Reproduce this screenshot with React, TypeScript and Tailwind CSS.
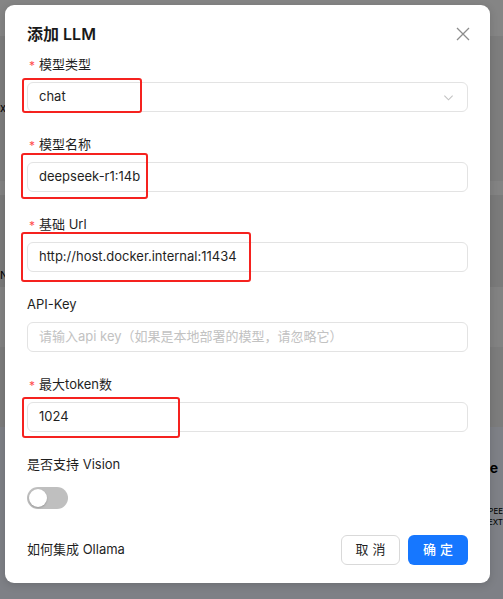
import React from "react";

type MarkProps = {
  left: number;
  top: number;
  width: number;
  height: number;
};

// red annotation rectangle drawn over a field
function Mark({ left, top, width, height }: MarkProps) {
  return (
    <div
      className="absolute border-2 border-[#f5221f] rounded-[3px] pointer-events-none"
      style={{ left, top, width, height }}
    />
  );
}

type FieldProps = {
  label: string;
  required?: boolean;
  value?: string;
  placeholder?: string;
  select?: boolean;
  mark?: MarkProps;
};

function Field(props: FieldProps) {
  const { label, required, value, placeholder, select, mark } = props;
  return (
    <div className="mb-[21px]">
      <div className="h-[22px] mb-[7px] flex items-center text-[13px] text-[#1f1f1f] pt-[1px]">
        {required && <span className="text-[#ff4d4f] mr-[4px] ml-[2px] text-[12px] mt-[2px]">*</span>}
        <span>{label}</span>
      </div>
      <div className="relative">
        <div className="h-[30px] rounded-[6px] border border-[#e3e3e3] bg-white flex items-center px-[11px] text-[13px]">
          {value ? (
            <span className="text-[#1f1f1f]">{value}</span>
          ) : (
            <span className="text-[#c2c2c2]">{placeholder}</span>
          )}
          {select && (
            <svg className="ml-auto mr-[2px]" width="11" height="11" viewBox="0 0 12 12" fill="none">
              <path d="M1.5 4l4.5 4.5L10.5 4" stroke="#c2c2c2" strokeWidth="1.2" />
            </svg>
          )}
        </div>
        {mark && <Mark {...mark} />}
      </div>
    </div>
  );
}

export default function App() {
  return (
    <div
      className="relative w-[503px] h-[599px] overflow-hidden bg-[#7f7f7f]"
      style={{ fontFamily: "Inter, 'Noto Sans CJK SC', sans-serif" }}
    >
      {/* dimmed page underneath */}
      <div className="flex flex-col h-full">
        <div className="h-[36px] bg-[#858585]" />
        <div className="h-[145px] bg-[#7d7d7d] flex items-center">
          <span className="text-[11px] text-black">x</span>
        </div>
        <div className="h-[14px] bg-[#838383]" />
        <div className="h-[92px] bg-[#7a7a7a] flex items-end pb-[4px]">
          <span className="text-[11px] text-black">N</span>
        </div>
        <div className="h-[60px] bg-[#828282]" />
        <div className="h-[80px] bg-[#7c7c7c]" />
        <div className="flex-1 bg-[#7e8086] flex flex-col items-end pt-[30px]">
          <span className="text-[14px] font-bold text-black mr-[5px]">e</span>
          <span className="text-[8px] text-black mt-[28px] leading-[11px]">PEE</span>
          <span className="text-[8px] text-black leading-[11px]">EXT</span>
        </div>
      </div>

      {/* modal */}
      <div className="absolute left-[5px] top-[5px] w-[485px] h-[578px] bg-white rounded-[9px] shadow-[0_2px_8px_rgba(0,0,0,0.15)] px-[22px] pt-[17px] pb-[18px] flex flex-col">
        <div className="h-[24px] mb-[7px] flex items-center justify-between">
          <span className="text-[16px] font-semibold text-[#1a1a1a]">添加 LLM</span>
          <svg width="14" height="14" viewBox="0 0 14 14" className="mr-[-2px]">
            <path d="M1 1l12 12M13 1L1 13" stroke="#8c8c8c" strokeWidth="1.3" />
          </svg>
        </div>

        <Field label="模型类型" required value="chat" select mark={{ left: -5, top: -4, width: 120, height: 35 }} />
        <Field label="模型名称" required value="deepseek-r1:14b" mark={{ left: -6, top: -9, width: 127, height: 46 }} />
        <Field label="基础 Url" required value="http://host.docker.internal:11434" mark={{ left: -6, top: -10, width: 230, height: 50 }} />
        <Field label="API-Key" placeholder="请输入api key（如果是本地部署的模型，请忽略它）" />
        <Field label="最大token数" required value="1024" mark={{ left: -5, top: -5, width: 158, height: 41 }} />

        <div className="h-[22px] mb-[12px] flex items-center text-[13px] text-[#1f1f1f] pt-[1px]">是否支持 Vision</div>
        <div className="w-[41px] h-[22px] rounded-full bg-[#bfbfbf] flex items-center px-[2px]">
          <div className="w-[18px] h-[18px] rounded-full bg-white shadow-[0_1px_2px_rgba(0,0,0,0.2)]" />
        </div>

        <div className="mt-auto flex items-center">
          <span className="text-[13px] text-[#1f1f1f]">如何集成 Ollama</span>
          <div className="ml-auto flex gap-[8px]">
            <button className="w-[59px] h-[30px] rounded-[6px] border border-[#d9d9d9] bg-white text-[13px] text-[#1f1f1f] tracking-[4px] pl-[4px]">
              取消
            </button>
            <button className="w-[60px] h-[30px] rounded-[6px] bg-[#1677ff] text-[13px] font-medium text-white tracking-[4px] pl-[4px]">
              确定
            </button>
          </div>
        </div>
      </div>
    </div>
  );
}
